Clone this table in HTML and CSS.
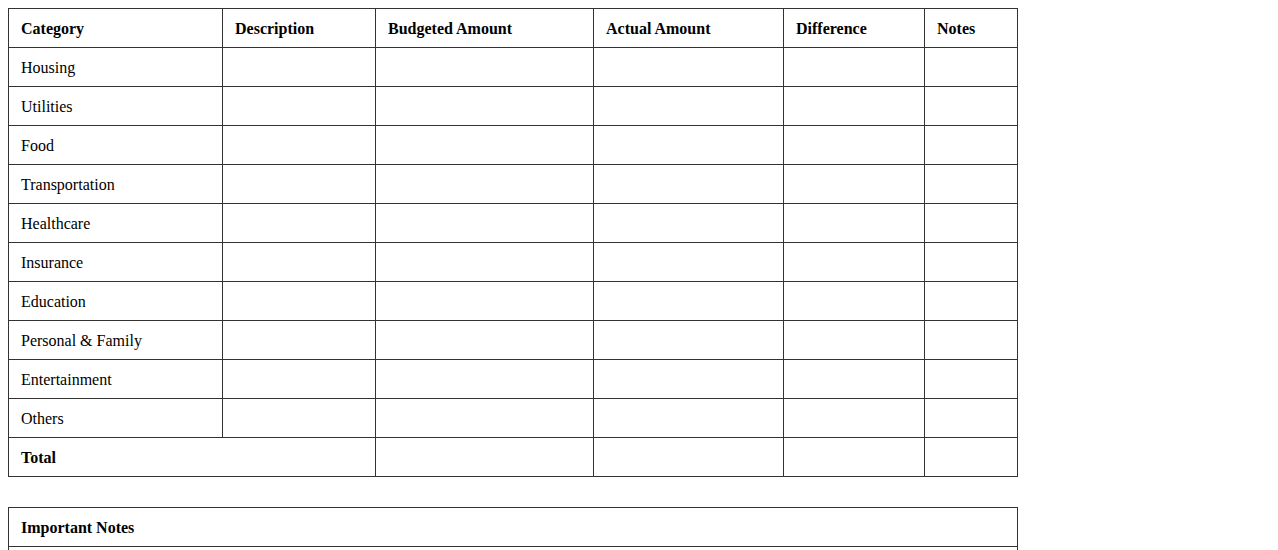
FILE: index.html
```html
<!DOCTYPE html>
<html>
<head>
<meta charset="utf-8">
<link rel="stylesheet" href="styles.css">
</head>
<body>
<table class="budget">
  <colgroup>
    <col class="c1"><col class="c2"><col class="c3"><col class="c4"><col class="c5"><col class="c6">
  </colgroup>
  <thead>
    <tr><th>Category</th><th>Description</th><th>Budgeted Amount</th><th>Actual Amount</th><th>Difference</th><th>Notes</th></tr>
  </thead>
  <tbody>
    <tr><td>Housing</td><td></td><td></td><td></td><td></td><td></td></tr>
    <tr><td>Utilities</td><td></td><td></td><td></td><td></td><td></td></tr>
    <tr><td>Food</td><td></td><td></td><td></td><td></td><td></td></tr>
    <tr><td>Transportation</td><td></td><td></td><td></td><td></td><td></td></tr>
    <tr><td>Healthcare</td><td></td><td></td><td></td><td></td><td></td></tr>
    <tr><td>Insurance</td><td></td><td></td><td></td><td></td><td></td></tr>
    <tr><td>Education</td><td></td><td></td><td></td><td></td><td></td></tr>
    <tr><td>Personal &amp; Family</td><td></td><td></td><td></td><td></td><td></td></tr>
    <tr><td>Entertainment</td><td></td><td></td><td></td><td></td><td></td></tr>
    <tr><td>Others</td><td></td><td></td><td></td><td></td><td></td></tr>
    <tr><th colspan="2">Total</th><td></td><td></td><td></td><td></td></tr>
  </tbody>
</table>
<table class="notes">
  <tr><th>Important Notes</th></tr>
  <tr><td></td></tr>
</table>
</body>
</html>
```
FILE: styles.css
```css
body {
  margin: 8px;
  font-family: "Liberation Serif", "Times New Roman", serif;
  font-size: 16px;
  color: #000;
  background: #fff;
}
table {
  border-collapse: collapse;
  table-layout: fixed;
  width: 1010px;
}
th, td {
  border: 1px solid #333;
  padding: 11px 12px 9px;
  line-height: 18px;
  height: 18px;
  text-align: left;
  vertical-align: middle;
}
th { font-weight: bold; }
.c1 { width: 214px; }
.c2 { width: 153px; }
.c3 { width: 218px; }
.c4 { width: 190px; }
.c5 { width: 141px; }
.c6 { width: 93px; }
.budget { margin-bottom: 30px; }
```
